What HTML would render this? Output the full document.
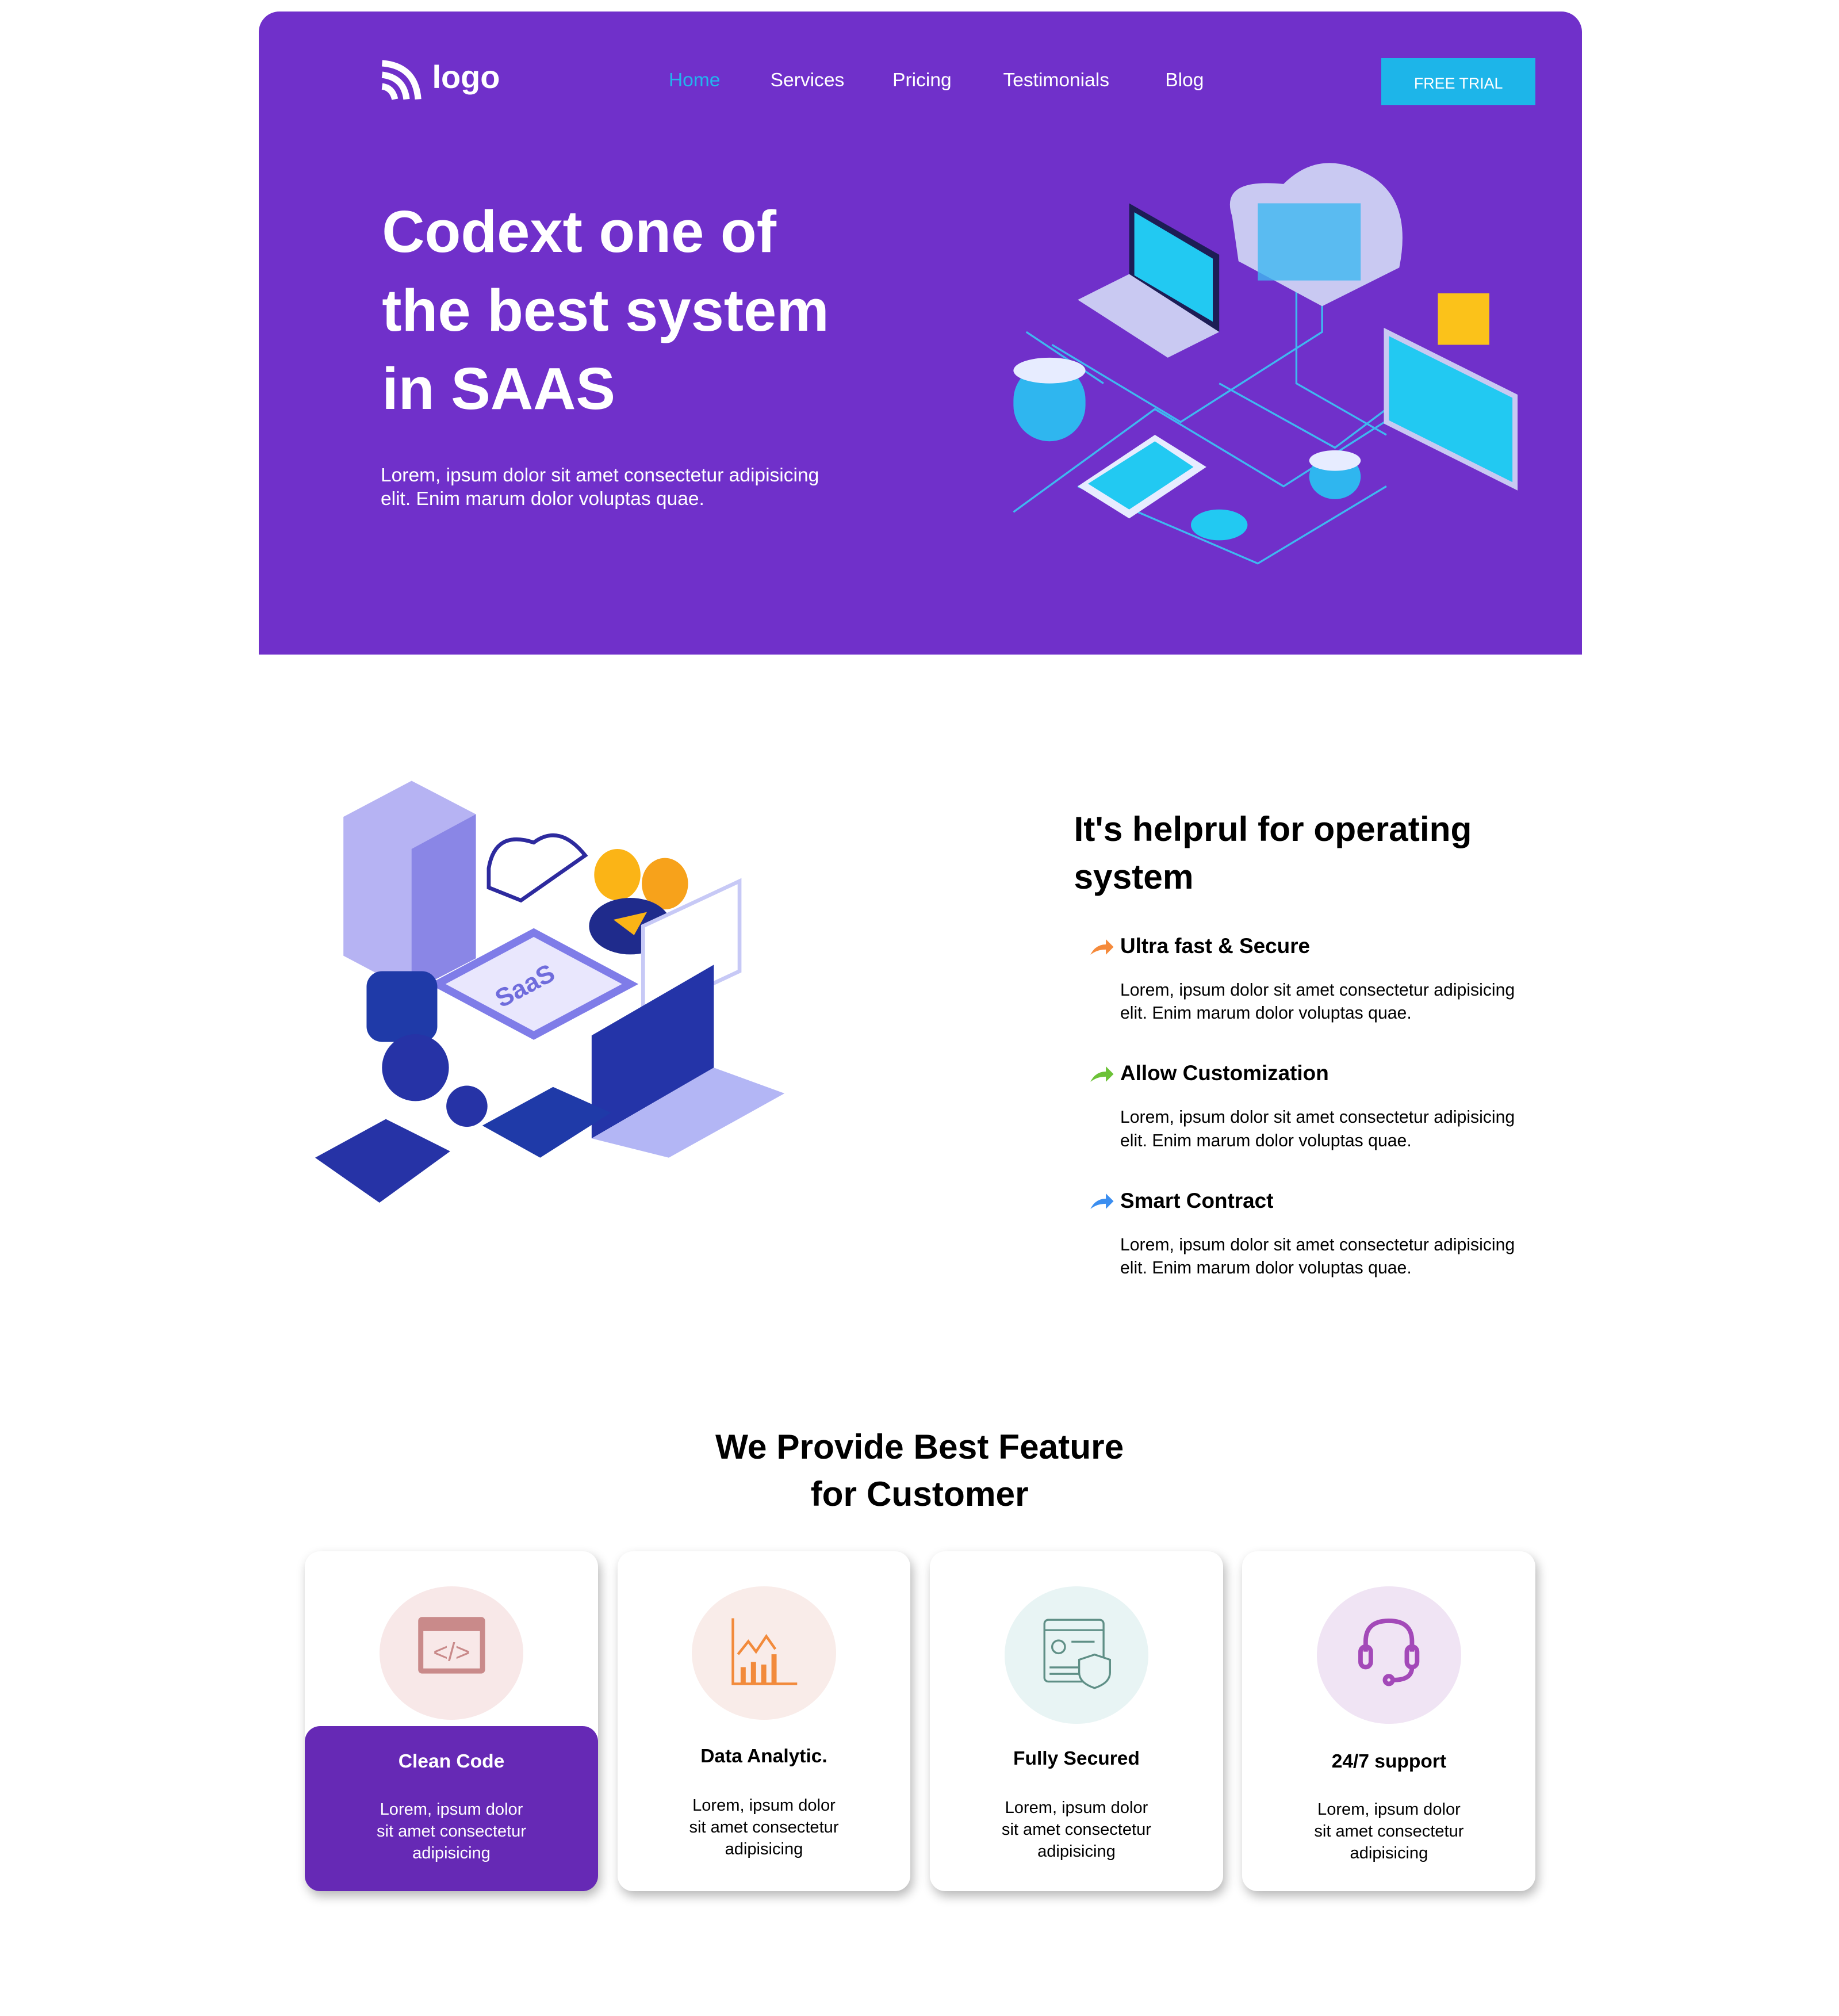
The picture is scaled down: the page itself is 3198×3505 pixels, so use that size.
<!DOCTYPE html>
<html><head><meta charset="utf-8"><style>
html,body{margin:0;padding:0;background:#fff;}
body{width:3198px;height:3504px;overflow:hidden;}
#w{width:1430px;height:1567px;position:relative;zoom:2.2365;font-family:"Liberation Sans",sans-serif;color:#000;}
.a{position:absolute;white-space:nowrap;}
.hero{position:absolute;left:201px;top:9px;width:1029px;height:500px;background:#7030ca;border-radius:16px 16px 0 0;}
.nav{font-size:15px;color:#fff;top:54px;}
.card{position:absolute;top:1206px;width:228px;height:264px;background:#fff;border-radius:12px;box-shadow:2px 4px 8px rgba(0,0,0,.28);overflow:hidden;text-align:center;}
.card .c{position:absolute;left:58px;top:27px;width:112px;height:104px;border-radius:50%;}
.card .t{position:absolute;left:0;right:0;font-weight:bold;font-size:15px;}
.card .d{position:absolute;left:0;right:0;font-size:13px;line-height:17px;}
.ft{font-weight:bold;font-size:16.5px;left:871px;}
.fd{font-size:13.5px;line-height:18px;left:871px;}
</style></head><body><div id="w">
<div class="hero"></div>
<svg class="a" style="left:295px;top:45px" width="34" height="33" viewBox="0 0 34 33"><path d="M2 4 Q28 6 30 32" stroke="#fff" stroke-width="5" fill="none"/><path d="M2 13 Q19 15 21 32" stroke="#fff" stroke-width="5" fill="none"/><path d="M2 22 Q10 23 12 32" stroke="#fff" stroke-width="5" fill="none"/></svg>
<div class="a" style="left:336px;top:45px;font-size:25px;font-weight:bold;color:#fff">logo</div>
<div class="a nav" style="left:520px;color:#22b5ee">Home</div>
<div class="a nav" style="left:599px">Services</div>
<div class="a nav" style="left:694px">Pricing</div>
<div class="a nav" style="left:780px">Testimonials</div>
<div class="a nav" style="left:906px">Blog</div>
<div class="a" style="left:1074px;top:45px;width:120px;height:37px;background:#1db5e9;color:#fff;font-size:12px;line-height:40px;text-align:center">FREE TRIAL</div>
<div class="a" style="left:297px;top:150px;font-size:46px;line-height:61px;color:#fff;font-weight:bold;white-space:normal;width:420px">Codext one of<br>the best system<br>in SAAS</div>
<div class="a" style="left:296px;top:361px;font-size:15px;line-height:18px;color:#fff">Lorem, ipsum dolor sit amet consectetur adipisicing<br>elit. Enim marum dolor voluptas quae.</div>
<svg class="a" style="left:778px;top:118px" width="420" height="330" viewBox="0 0 420 330">
<g stroke="#3fb8f0" stroke-width="1.5" fill="none"><path d="M10 280 L120 200 L220 260 L330 190 L400 240"/><path d="M40 150 L140 210 L250 140 L250 80"/><path d="M60 260 L200 320 L300 260"/><path d="M170 180 L260 230 L340 170"/><path d="M20 140 L80 180"/><path d="M230 100 L230 180 L300 220"/></g>
<path d="M180 50 Q170 20 220 25 Q250 -5 290 20 Q320 40 310 90 L250 120 L185 85 Z" fill="#c9c9f2"/>
<rect x="200" y="40" width="80" height="60" fill="#3fb8f0" opacity=".8"/>
<path d="M100 40 L170 80 L170 140 L100 100 Z" fill="#1d1d55"/><path d="M104 47 L165 83 L165 132 L104 96 Z" fill="#22c9f2"/>
<path d="M60 115 L100 95 L170 140 L130 160 Z" fill="#c9c9f2"/>
<rect x="10" y="165" width="56" height="60" rx="28" fill="#2fb6ef"/><ellipse cx="38" cy="170" rx="28" ry="10" fill="#e7ecff"/>
<path d="M300 140 L400 190 L400 260 L300 210 Z" fill="#22c9f2" stroke="#c9c9f2" stroke-width="4"/>
<rect x="340" y="110" width="40" height="40" fill="#fbc21a"/>
<rect x="240" y="235" width="40" height="35" rx="20" fill="#2fb6ef"/><ellipse cx="260" cy="240" rx="20" ry="8" fill="#e7ecff"/>
<path d="M60 260 L120 220 L160 245 L100 285 Z" fill="#e7ecff"/><path d="M68 258 L120 225 L150 245 L100 278 Z" fill="#22c9f2"/>
<ellipse cx="170" cy="290" rx="22" ry="12" fill="#22c9f2"/>
</svg>
<svg class="a" style="left:245px;top:605px" width="365" height="335" viewBox="0 0 365 335">
<path d="M22 30 L75 2 L125 28 L125 140 L75 166 L22 138 Z" fill="#b6b3f3"/><path d="M75 55 L125 28 L125 140 L75 166 Z" fill="#8a86e6"/>
<path d="M135 70 Q140 40 170 50 Q190 35 210 60 L160 95 L135 85 Z" fill="#fff" stroke="#2d2a9e" stroke-width="3"/>
<ellipse cx="235" cy="75" rx="18" ry="20" fill="#fbb416"/><ellipse cx="272" cy="82" rx="18" ry="20" fill="#f7a21b"/>
<ellipse cx="245" cy="115" rx="32" ry="22" fill="#1f2b8c"/><path d="M232 110 L258 104 L248 122 Z" fill="#fbb416"/>
<path d="M95 160 L170 120 L245 160 L170 200 Z" fill="#e9e7fd" stroke="#7f7ce8" stroke-width="6"/><text x="140" y="170" fill="#6f6cdc" font-size="20" font-weight="bold" transform="rotate(-28 160 165)">SaaS</text>
<path d="M255 115 L330 80 L330 150 L255 185 Z" fill="#fff" stroke="#c7c9f6" stroke-width="3"/>
<path d="M215 200 L310 145 L310 225 L215 280 Z" fill="#2434a8"/><path d="M215 280 L310 225 L365 245 L275 295 Z" fill="#b3b6f5"/>
<rect x="40" y="150" width="55" height="55" rx="12" fill="#1f3aa8"/>
<circle cx="78" cy="225" r="26" fill="#2633a6"/><circle cx="118" cy="255" r="16" fill="#2633a6"/>
<path d="M0 295 L55 265 L105 290 L50 330 Z" fill="#2633a6"/>
<path d="M130 270 L185 240 L230 260 L175 295 Z" fill="#1f3aa8"/>
</svg>
<div class="a" style="left:835px;top:626px;font-size:27px;line-height:37px;font-weight:bold">It's helprul for operating<br>system</div>
<svg class="a" style="left:847px;top:730px" width="20" height="14"><path d="M1 12 Q5 4 13 4 L13 0 L19 6 L13 12 L13 8 Q6 8 1 12Z" fill="#f58a3b"/></svg>
<div class="a ft" style="top:726px">Ultra fast &amp; Secure</div>
<div class="a fd" style="top:761px">Lorem, ipsum dolor sit amet consectetur adipisicing<br>elit. Enim marum dolor voluptas quae.</div>
<svg class="a" style="left:847px;top:829px" width="20" height="14"><path d="M1 12 Q5 4 13 4 L13 0 L19 6 L13 12 L13 8 Q6 8 1 12Z" fill="#6cc237"/></svg>
<div class="a ft" style="top:825px">Allow Customization</div>
<div class="a fd" style="top:860px">Lorem, ipsum dolor sit amet consectetur adipisicing<br>elit. Enim marum dolor voluptas quae.</div>
<svg class="a" style="left:847px;top:928px" width="20" height="14"><path d="M1 12 Q5 4 13 4 L13 0 L19 6 L13 12 L13 8 Q6 8 1 12Z" fill="#3b8ef0"/></svg>
<div class="a ft" style="top:924px">Smart Contract</div>
<div class="a fd" style="top:959px">Lorem, ipsum dolor sit amet consectetur adipisicing<br>elit. Enim marum dolor voluptas quae.</div>
<div class="a" style="left:515px;width:400px;text-align:center;top:1106px;font-size:27px;line-height:37px;font-weight:bold">We Provide Best Feature<br>for Customer</div>

<div class="card" style="left:237px">
 <div class="c" style="background:#f8e8e8;top:27px;height:104px"></div>
 <svg class="a" style="left:87px;top:50px" width="54" height="46"><rect x="1" y="1" width="52" height="44" rx="3" fill="#c98a8a"/><rect x="5" y="12" width="44" height="29" fill="#f8e8e8"/><text x="27" y="35" text-anchor="middle" font-size="20" fill="#c98a8a" font-family="Liberation Sans">&lt;/&gt;</text></svg>
 <div style="position:absolute;left:0;right:0;top:136px;bottom:0;background:#6629b5;border-radius:12px 12px 0 0"></div>
 <div class="t" style="top:155px;color:#fff">Clean Code</div>
 <div class="d" style="top:192px;color:#fff">Lorem, ipsum dolor<br>sit amet consectetur<br>adipisicing</div>
</div>
<div class="card" style="left:480px">
 <div class="c" style="background:#f9ece9;height:104px"></div>
 <svg class="a" style="left:88px;top:50px" width="55" height="55"><path d="M2 2 V53 H52" stroke="#f28a3b" stroke-width="2" fill="none"/><path d="M6 30 L14 20 L20 28 L28 16 L35 26" stroke="#f28a3b" stroke-width="2" fill="none"/><g fill="#f28a3b"><rect x="8" y="40" width="4" height="13"/><rect x="16" y="36" width="4" height="17"/><rect x="24" y="38" width="4" height="15"/><rect x="32" y="30" width="4" height="23"/></g></svg>
 <div class="t" style="top:151px">Data Analytic.</div>
 <div class="d" style="top:189px">Lorem, ipsum dolor<br>sit amet consectetur<br>adipisicing</div>
</div>
<div class="card" style="left:723px">
 <div class="c" style="background:#e8f4f4;height:107px"></div>
 <svg class="a" style="left:88px;top:52px" width="55" height="55"><g stroke="#5f8f86" stroke-width="1.5" fill="none"><rect x="1" y="1" width="46" height="48" rx="3"/><line x1="1" y1="9" x2="47" y2="9"/><circle cx="12" cy="22" r="5"/><line x1="22" y1="18" x2="40" y2="18"/><line x1="5" y1="38" x2="30" y2="38"/><line x1="5" y1="43" x2="30" y2="43"/><path d="M40 28 L52 32 V42 Q52 50 40 54 Q28 50 28 42 V32 Z" fill="#e8f4f4"/></g></svg>
 <div class="t" style="top:153px">Fully Secured</div>
 <div class="d" style="top:191px">Lorem, ipsum dolor<br>sit amet consectetur<br>adipisicing</div>
</div>
<div class="card" style="left:966px">
 <div class="c" style="background:#f0e4f4;height:107px"></div>
 <svg class="a" style="left:88px;top:50px" width="55" height="55"><g stroke="#a349b8" stroke-width="3.5" fill="none"><path d="M8 28 V20 Q8 4 26 4 Q44 4 44 20 V28"/><rect x="4" y="24" width="8" height="16" rx="4"/><rect x="40" y="24" width="8" height="16" rx="4"/><path d="M44 40 Q44 50 30 50"/><circle cx="26" cy="50" r="3"/></g></svg>
 <div class="t" style="top:155px">24/7 support</div>
 <div class="d" style="top:192px">Lorem, ipsum dolor<br>sit amet consectetur<br>adipisicing</div>
</div>
</div></body></html>
